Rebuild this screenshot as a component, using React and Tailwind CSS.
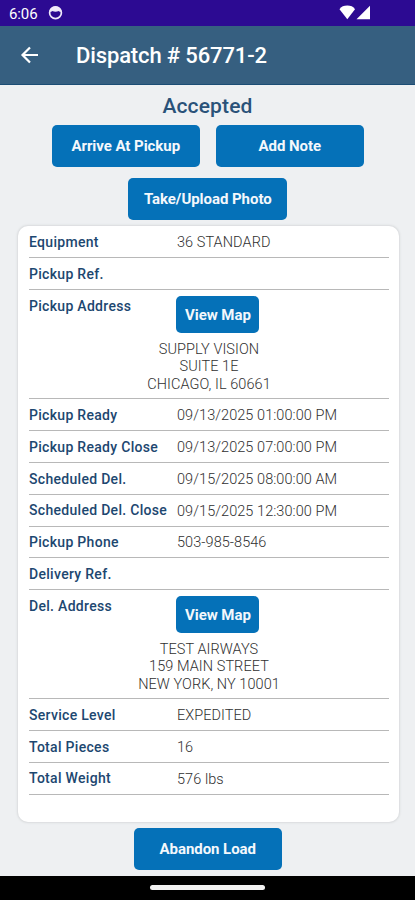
import { clsx } from "clsx";

const pickupRows = [
  { label: "Pickup Ready", value: "09/13/2025 01:00:00 PM" },
  { label: "Pickup Ready Close", value: "09/13/2025 07:00:00 PM" },
  { label: "Scheduled Del.", value: "09/15/2025 08:00:00 AM" },
  { label: "Scheduled Del. Close", value: "09/15/2025 12:30:00 PM" },
  { label: "Pickup Phone", value: "503-985-8546" },
  { label: "Delivery Ref.", value: "" },
];

const totalRows = [
  { label: "Service Level", value: "EXPEDITED" },
  { label: "Total Pieces", value: "16" },
  { label: "Total Weight", value: "576 lbs" },
];

function Button({ className, children }) {
  return (
    <button
      className={clsx(
        "flex items-center justify-center rounded-[5px] bg-[#0571b8] pt-px text-[15px] font-bold tracking-[-0.05px] text-[#f4f8fc] whitespace-nowrap",
        className
      )}
    >
      {children}
    </button>
  );
}

function Row({ label, value }) {
  return (
    <div className="flex h-[31.8px] items-center border-b border-[#b8b8b8] pt-[1.5px]">
      <span className="w-[148px] shrink-0 text-[14px] font-medium tracking-[0.3px] text-[#1d4770] whitespace-nowrap">
        {label}
      </span>
      <span className="pt-px text-[14.5px] font-light tracking-[0.06px] text-[#303030] whitespace-nowrap">
        {value}
      </span>
    </div>
  );
}

function AddressRow({ label, lines }) {
  return (
    <div className="h-[109.1px] border-b border-[#b8b8b8] pt-[6px]">
      <div className="flex h-[37px]">
        <span className="w-[147.400px] shrink-0 text-[14px] leading-5 font-medium tracking-[0.3px] text-[#1d4770]">
          {label}
        </span>
        <Button className="h-[37px] w-[83px]">View Map</Button>
      </div>
      <div className="mt-[7.5px] text-center text-[14.5px] leading-[17.5px] font-light tracking-[0.06px] text-[#303030]">
        {lines.map((line) => (
          <p key={line}>{line}</p>
        ))}
      </div>
    </div>
  );
}

export default function App() {
  return (
    <div className="flex h-[900px] w-[415px] flex-col overflow-hidden bg-[#eef0f2] font-['Roboto',sans-serif]">
      {/* Status bar */}
      <div className="flex h-[25.5px] shrink-0 items-center bg-[#2c0a92] pr-[44px] pl-[9px] text-white">
        <span className="pt-[2px] text-[15px] tracking-[-0.1px]">6:06</span>
        <svg className="ml-[10px]" width="15" height="15" viewBox="0 0 15 15">
          <circle cx="7.5" cy="7.7" r="5.900" fill="none" stroke="#efeafa" strokeWidth="1.7" />
          <path d="M1.500 6.500C2 3 4.500 1.500 7.500 1.500s5.500 1.500 6 5C12 7 11 6.600 10.500 6C9 7 6 7 4.500 6C4 6.600 3 7 1.500 6.500z" fill="#efeafa" />
        </svg>
        <svg className="ml-auto" width="32" height="15" viewBox="0 0 32 15">
          <path d="M.500 4.200C2 1.500 5 .600 8.300 .600s6.200 .900 7.700 3.600L8.300 14.300z" fill="#fff" />
          <path d="M31 .800V14.300H17.500z" fill="#fff" />
        </svg>
      </div>

      {/* App bar */}
      <header className="flex h-[59.5px] shrink-0 items-center border-b border-[#1b4d74] bg-[#365f80] pl-[20px]">
        <svg width="19" height="18" viewBox="0 0 19 18" fill="none" stroke="#fff" strokeWidth="2.200">
          <path d="M18 9H2.800M10 1.500L2.500 9l7.500 7.500" />
        </svg>
        <h1 className="ml-[37px] pt-[2px] text-[22px] font-medium tracking-[-0.13px] text-white">
          Dispatch # 56771-2
        </h1>
      </header>

      <main className="flex flex-col items-center">
        <h2 className="mt-[8px] text-[21px] leading-[26px] font-medium tracking-[0.15px] text-[#2a5279]">
          Accepted
        </h2>
        <div className="mt-[6px] ml-[0.5px] flex gap-4">
          <Button className="h-[42px] w-[148px]">Arrive At Pickup</Button>
          <Button className="h-[42px] w-[148px]">Add Note</Button>
        </div>
        <Button className="mt-[11px] ml-[0.5px] h-[42px] w-[159px]">Take/Upload Photo</Button>

        {/* Load details */}
        <section className="mt-[6px] ml-[2px] h-[596px] w-[381px] rounded-[10px] bg-white pt-[0.7px] pr-[10px] pl-[11px] shadow-[0_0_2px_1px_#d9dbdd]">
          <Row label="Equipment" value="36 STANDARD" />
          <Row label="Pickup Ref." value="" />
          <AddressRow
            label="Pickup Address"
            lines={["SUPPLY VISION", "SUITE 1E", "CHICAGO, IL 60661"]}
          />
          {pickupRows.map((row) => (
            <Row key={row.label} {...row} />
          ))}
          <AddressRow
            label="Del. Address"
            lines={["TEST AIRWAYS", "159 MAIN STREET", "NEW YORK, NY 10001"]}
          />
          {totalRows.map((row) => (
            <Row key={row.label} {...row} />
          ))}
        </section>

        <Button className="mt-[5.5px] ml-[0.5px] h-[42px] w-[148px]">Abandon Load</Button>
      </main>

      {/* Gesture bar */}
      <footer className="mt-auto flex h-[24.5px] shrink-0 justify-center bg-black pt-[9.5px]">
        <div className="h-[5px] w-[115px] rounded-full bg-[#f2f2f2]" />
      </footer>
    </div>
  );
}
